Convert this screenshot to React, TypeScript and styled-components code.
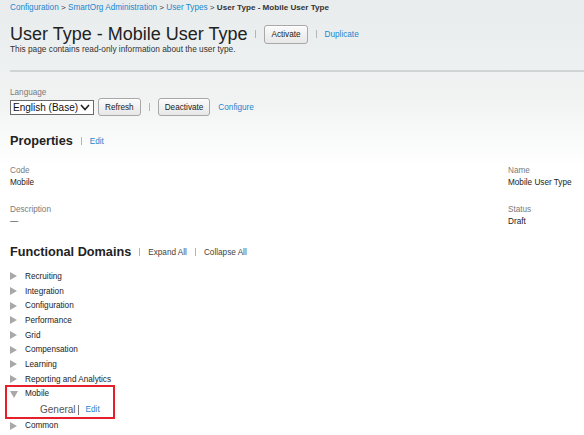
import styled, { createGlobalStyle } from 'styled-components';

const GlobalStyle = createGlobalStyle`
    html, body {
        margin: 0;
        padding: 0;
    }
    body {
        font-family: 'Liberation Sans', Arial, sans-serif;
        color: #333;
        background: linear-gradient(#e8ecec 0, #f1f3f3 100px, #ffffff 165px) no-repeat;
        background-color: #fff;
        min-height: 435px;
        overflow: hidden;
    }
`;

const domains = [
    'Recruiting',
    'Integration',
    'Configuration',
    'Performance',
    'Grid',
    'Compensation',
    'Learning',
    'Reporting and Analytics',
];

const Triangle = ({ open }: { open?: boolean }) =>
    open ? (
        <TriIcon width="8" height="8" viewBox="0 0 8 8">
            <path d="M0 1 L8 1 L4 8 Z" fill="#a8a8a8" />
        </TriIcon>
    ) : (
        <TriIcon width="8" height="8" viewBox="0 0 8 8">
            <path d="M0 0 L7 4 L0 8 Z" fill="#a8a8a8" />
        </TriIcon>
    );

const App = () => {
    return (
        <>
            <GlobalStyle />
            <Page>
                <Breadcrumb>
                    <Link href="#">Configuration</Link> &gt;{' '}
                    <Link href="#">SmartOrg Administration</Link> &gt;{' '}
                    <Link href="#">User Types</Link> &gt;{' '}
                    <Current>User Type - Mobile User Type</Current>
                </Breadcrumb>

                <TitleRow>
                    <Title>User Type - Mobile User Type</Title>
                    <Divider />
                    <Button $height={19}>Activate</Button>
                    <Divider />
                    <Link href="#">Duplicate</Link>
                </TitleRow>
                <Subtitle>
                    This page contains read-only information about the user
                    type.
                </Subtitle>

                <Rule />

                <FieldLabel $top={15}>Language</FieldLabel>
                <Controls>
                    <SelectBox>
                        <Select defaultValue="en">
                            <option value="en">English (Base)</option>
                        </Select>
                        <svg width="10" height="7" viewBox="0 0 10 7">
                            <path
                                d="M1 1 L5 5.5 L9 1"
                                fill="none"
                                stroke="#222"
                                strokeWidth="1.6"
                            />
                        </svg>
                    </SelectBox>
                    <Button $height={18} $left={4}>
                        Refresh
                    </Button>
                    <Divider />
                    <Button $height={18}>Deactivate</Button>
                    <Link href="#" style={{ marginLeft: 8 }}>
                        Configure
                    </Link>
                </Controls>

                <SectionHeader $top={17}>
                    <SectionTitle>Properties</SectionTitle>
                    <Divider />
                    <Link href="#">Edit</Link>
                </SectionHeader>

                <Fields>
                    <Field>
                        <FieldLabel>Code</FieldLabel>
                        <FieldValue>Mobile</FieldValue>
                    </Field>
                    <Field>
                        <FieldLabel>Name</FieldLabel>
                        <FieldValue>Mobile User Type</FieldValue>
                    </Field>
                    <Field>
                        <FieldLabel>Description</FieldLabel>
                        <FieldValue>—</FieldValue>
                    </Field>
                    <Field>
                        <FieldLabel>Status</FieldLabel>
                        <FieldValue>Draft</FieldValue>
                    </Field>
                </Fields>

                <SectionHeader $top={16}>
                    <SectionTitle>Functional Domains</SectionTitle>
                    <Divider />
                    <PlainLink href="#">Expand All</PlainLink>
                    <Divider />
                    <PlainLink href="#">Collapse All</PlainLink>
                </SectionHeader>

                <Tree>
                    {domains.map((d) => (
                        <TreeRow key={d}>
                            <Triangle />
                            {d}
                        </TreeRow>
                    ))}
                    <Highlighted>
                        <TreeRow>
                            <Triangle open />
                            Mobile
                        </TreeRow>
                        <SubRow>
                            <SubLabel>General</SubLabel>
                            <SubDivider />
                            <Link href="#">Edit</Link>
                        </SubRow>
                        <Highlight />
                    </Highlighted>
                    <TreeRow>
                        <Triangle />
                        Common
                    </TreeRow>
                </Tree>
            </Page>
        </>
    );
};

export default App;

const Page = styled.div`
    padding-left: 10px;
    font-size: 8.2px;
`;

const Breadcrumb = styled.div`
    padding-top: 2px;
    line-height: 12px;
    font-size: 8.1px;
    color: #333;
    white-space: nowrap;
`;

const Link = styled.a`
    color: #1c86cf;
    text-decoration: none;
    font-size: 8.2px;
    white-space: nowrap;
`;

const PlainLink = styled.a`
    color: #444;
    text-decoration: none;
    font-size: 8.2px;
`;

const Current = styled.span`
    font-weight: bold;
    color: #333;
`;

const TitleRow = styled.div`
    margin-top: 9px;
    display: flex;
    align-items: center;
    height: 22px;
`;

const Title = styled.h1`
    margin: 0;
    font-size: 18px;
    font-weight: normal;
    line-height: 22px;
    color: #222;
    white-space: nowrap;
`;

const Divider = styled.span`
    display: inline-block;
    width: 1px;
    height: 8px;
    background: #b5b5b5;
    margin: 0 8px;
    flex-shrink: 0;
`;

const Button = styled.button<{ $height: number; $left?: number }>`
    height: ${({ $height }) => $height}px;
    margin-left: ${({ $left }) => $left ?? 0}px;
    padding: 0 6px;
    font-family: 'Liberation Sans', Arial, sans-serif;
    font-size: 8.2px;
    color: #222;
    background: linear-gradient(#fbfbfb, #e7e7e7);
    border: 1px solid #a8a8a8;
    border-radius: 3px;
    box-shadow: inset 0 1px 0 #fff;
    flex-shrink: 0;
`;

const Subtitle = styled.div`
    font-size: 8.3px;
    line-height: 9px;
    color: #333;
`;

const Rule = styled.div`
    margin-top: 16px;
    height: 2px;
    background: #d0d4d4;
`;

const FieldLabel = styled.div<{ $top?: number }>`
    margin-top: ${({ $top }) => $top ?? 0}px;
    font-size: 8.2px;
    line-height: 12px;
    color: #7a7a7a;
`;

const Controls = styled.div`
    display: flex;
    align-items: center;
    height: 18px;
    margin-top: -1px;
`;

const SelectBox = styled.div`
    display: flex;
    align-items: center;
    width: 84px;
    height: 15px;
    box-sizing: border-box;
    border: 1px solid #6a6a6a;
    background: #fff;
    padding-right: 3px;
`;

const Select = styled.select`
    appearance: none;
    border: none;
    outline: none;
    background: transparent;
    flex: 1;
    min-width: 0;
    padding: 0 0 0 2px;
    font-family: 'Liberation Sans', Arial, sans-serif;
    font-size: 10px;
    color: #111;
`;

const SectionHeader = styled.div<{ $top: number }>`
    margin-top: ${({ $top }) => $top}px;
    display: flex;
    align-items: center;
    height: 16px;
`;

const SectionTitle = styled.h2`
    margin: 0;
    font-size: 12.7px;
    font-weight: bold;
    line-height: 16px;
    color: #222;
    white-space: nowrap;
`;

const Fields = styled.div`
    margin-top: 16px;
    display: grid;
    grid-template-columns: 498px 1fr;
    row-gap: 15px;
`;

const Field = styled.div`
    display: flex;
    flex-direction: column;
`;

const FieldValue = styled.div`
    font-size: 8.2px;
    line-height: 12px;
    color: #222;
    white-space: nowrap;
`;

const Tree = styled.div`
    margin-top: 9px;
`;

const TreeRow = styled.div`
    display: flex;
    align-items: center;
    height: 14.7px;
    font-size: 8.2px;
    color: #222;
`;

const TriIcon = styled.svg`
    margin-right: 7px;
    flex-shrink: 0;
`;

const Highlighted = styled.div`
    position: relative;
`;

const Highlight = styled.div`
    position: absolute;
    left: -5px;
    top: -2px;
    width: 110px;
    height: 34px;
    box-sizing: border-box;
    border: 2px solid #e5202b;
    pointer-events: none;
`;

const SubRow = styled.div`
    display: flex;
    align-items: center;
    height: 17px;
    padding-left: 30px;
`;

const SubLabel = styled.span`
    font-size: 10px;
    color: #555;
`;

const SubDivider = styled.span`
    display: inline-block;
    width: 1px;
    height: 10px;
    background: #777;
    margin: 0 7px 0 2px;
`;
